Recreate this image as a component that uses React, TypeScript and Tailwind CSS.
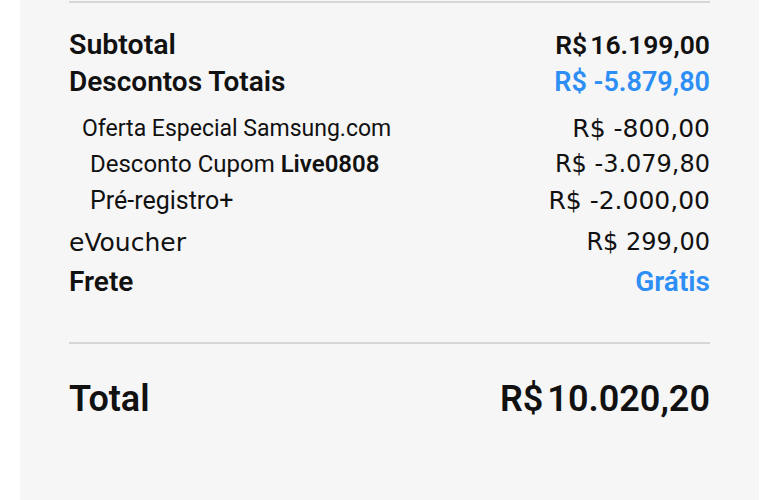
const roboto = { fontFamily: 'Roboto, "Noto Sans", sans-serif' };
const dejavu = { fontFamily: '"DejaVu Sans", Roboto, sans-serif' };

const subRows: { label: React.ReactNode; value: string; cls: string; valueCls: string }[] = [
  {
    label: 'Oferta Especial Samsung.com',
    value: 'R$ -800,00',
    cls: 'pl-[13px] text-[23px]',
    valueCls: 'text-[25px]',
  },
  {
    label: (
      <>
        Desconto Cupom <span className="font-semibold">Live0808</span>
      </>
    ),
    value: 'R$ -3.079,80',
    cls: 'pl-[21px] text-[24px]',
    valueCls: 'text-[24px]',
  },
  {
    label: 'Pré-registro+',
    value: 'R$ -2.000,00',
    cls: 'pl-[21px] text-[25px]',
    valueCls: 'text-[25px]',
  },
];

function Divider() {
  return <div className="h-[2px] w-full bg-[#d6d6d6]" />;
}

// "R$" followed by a narrow gap, as the bold amounts are set
function Money({ amount, gap }: { amount: string; gap: string }) {
  return (
    <span className="flex items-baseline">
      R$<span className={gap}>{amount}</span>
    </span>
  );
}

export default function App() {
  return (
    <div className="h-[500px] w-full overflow-hidden bg-white text-[#111]" style={roboto}>
      <div className="ml-[20px] h-full w-[739px] bg-[#f6f6f6] px-[49px] pt-[1px]">
        <Divider />

        <div className="mt-[24px] flex h-[36px] items-center justify-between font-semibold leading-none">
          <span className="text-[28.5px]">Subtotal</span>
          <span className="text-[26.5px]">
            <Money amount="16.199,00" gap="ml-[3px]" />
          </span>
        </div>
        <div className="flex h-[38px] items-center justify-between font-semibold leading-none">
          <span className="text-[28px]">Descontos Totais</span>
          <span className="text-[27px] text-[#2d8ef5]">R$ -5.879,80</span>
        </div>

        <div className="mt-[9px]">
          {subRows.map((r, i) => (
            <div key={i} className="flex h-[36px] items-center justify-between leading-none">
              <span className={r.cls}>{r.label}</span>
              <span className={r.valueCls} style={dejavu}>
                {r.value}
              </span>
            </div>
          ))}
        </div>

        <div className="mt-[4px] flex h-[40px] items-center justify-between leading-none" style={dejavu}>
          <span className="text-[25px]">eVoucher</span>
          <span className="text-[24px]">R$ 299,00</span>
        </div>
        <div className="flex h-[40px] items-center justify-between font-semibold leading-none">
          <span className="text-[28px]">Frete</span>
          <span className="text-[28px] text-[#2d8ef5]">Grátis</span>
        </div>

        <div className="mt-[40px]">
          <Divider />
        </div>

        <div className="mt-[30px] flex h-[50px] items-center justify-between font-semibold leading-none">
          <span className="text-[36px]">Total</span>
          <span className="text-[36px]">
            <Money amount="10.020,20" gap="ml-[4px]" />
          </span>
        </div>
      </div>
    </div>
  );
}
